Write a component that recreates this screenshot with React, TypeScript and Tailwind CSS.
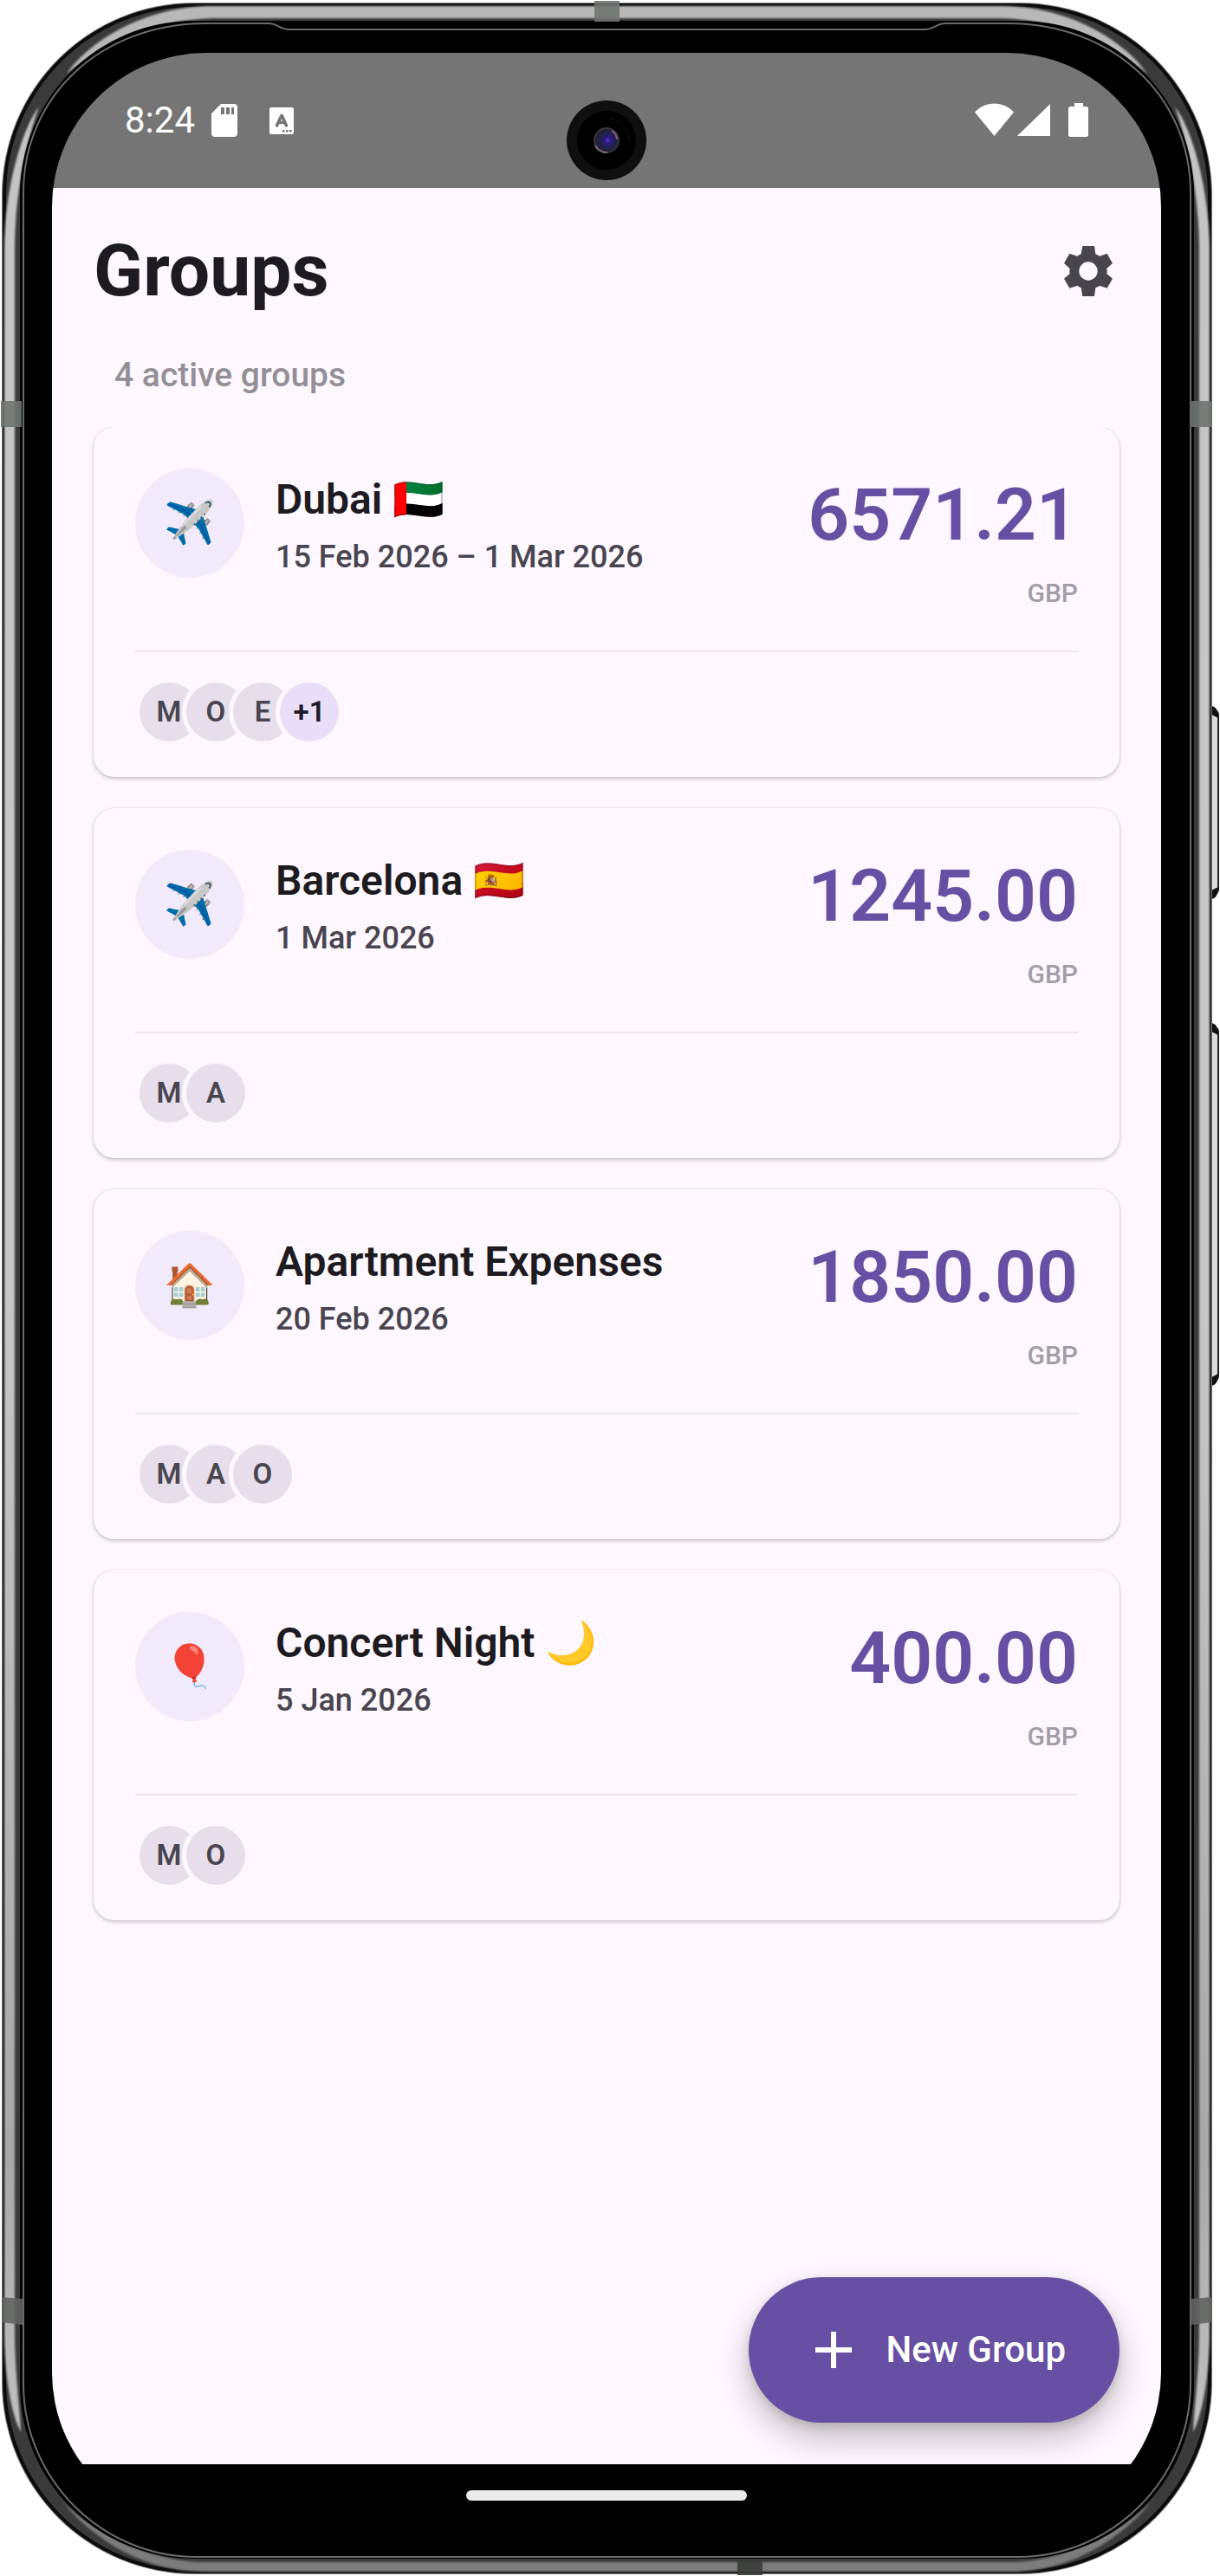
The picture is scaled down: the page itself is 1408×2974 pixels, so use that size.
import { Plus } from "lucide-react";

interface Group {
  id: string;
  icon: string;
  name: string;
  date: string;
  amount: string;
  currency: string;
  members: string[];
  extra?: string;
}

const groups: Group[] = [
  { id: "dubai", icon: "✈️", name: "Dubai 🇦🇪", date: "15 Feb 2026 – 1 Mar 2026", amount: "6571.21", currency: "GBP", members: ["M", "O", "E"], extra: "+1" },
  { id: "barcelona", icon: "✈️", name: "Barcelona 🇪🇸", date: "1 Mar 2026", amount: "1245.00", currency: "GBP", members: ["M", "A"] },
  { id: "apartment", icon: "🏠", name: "Apartment Expenses", date: "20 Feb 2026", amount: "1850.00", currency: "GBP", members: ["M", "A", "O"] },
  { id: "concert", icon: "🎈", name: "Concert Night 🌙", date: "5 Jan 2026", amount: "400.00", currency: "GBP", members: ["M", "O"] },
];

function PhoneCase() {
  return (
    <svg aria-hidden="true" className="absolute inset-0 size-full" viewBox="0 0 1408 2974" preserveAspectRatio="none">
      <defs>
        <linearGradient id="metal" x1="0" y1="0" x2="0" y2="1">
          <stop offset="0" stopColor="#c4c4c4" />
          <stop offset="0.5" stopColor="#c8c8c8" />
          <stop offset="0.88" stopColor="#a8a8a8" />
          <stop offset="1" stopColor="#c0c0c0" />
        </linearGradient>
        <filter id="soft" x="-5%" y="-5%" width="110%" height="110%">
          <feGaussianBlur stdDeviation="1" />
        </filter>
      </defs>

      {/* Side keys */}
      <g fill="#dcdcdc" stroke="#222" strokeWidth="2">
        <rect x="1390" y="820" width="16" height="212" rx="5" />
        <rect x="1390" y="1186" width="16" height="408" rx="5" />
      </g>
      <path d="M1398 815q8 1 8 14l-8-4zM1398 1038q8-1 8-14l-8 4zM1398 1181q8 1 8 14l-8-4zM1398 1600q8-1 8-14l-8 4z" fill="#111" />

      {/* Metal ring */}
      <rect x="2" y="3" width="1397" height="2969" rx="222" fill="#7a7a7a" />
      <rect x="3" y="4" width="1395" height="2967" rx="221" fill="#0c0c0c" />
      <rect x="7" y="8" width="1387" height="2959" rx="217" fill="#3a3a3a" />
      <g filter="url(#soft)">
        <path d="M77 85C105 45 170 7 245 7H1156C1231 7 1296 45 1324 85C1275 45 1210 22 1156 21H245C191 22 126 45 77 85Z" fill="#b8b8b8" />
        <path d="M45 123C22 155 5 225 5 290V2690C5 2730 10 2780 24 2808C23 2780 17 2740 17 2690V290C17 225 30 165 45 123Z" fill="url(#metal)" />
        <path d="M1356 123C1379 155 1396 225 1396 290V2690C1396 2730 1391 2780 1377 2808C1378 2780 1384 2740 1384 2690V290C1384 225 1371 165 1356 123Z" fill="url(#metal)" />
        <path d="M72 2888C110 2935 170 2969 235 2969H1166C1231 2969 1291 2935 1329 2888C1285 2930 1220 2958 1166 2958H235C181 2958 116 2930 72 2888Z" fill="#7c7c7c" />
      </g>
      <rect x="23" y="24" width="1355" height="2930" rx="201" fill="#000" />
      <path
        d="M27 223C27 110 117 28 236 27H310C320 27 323 34 334 34H1067C1078 34 1081 27 1091 27H1165C1284 28 1374 110 1374 223V2752C1374 2862 1284 2952 1174 2952H227C117 2952 27 2862 27 2752Z"
        fill="#000"
        stroke="#6a6a6a"
        strokeWidth="2"
      />

      {/* Antenna lines */}
      <g fill="#707470" fillOpacity="0.9">
        <path d="M686 1h29v24h-29zM1 463h24v30H1zM1375 463h24v30h-24z" />
        <path d="M2 2652l24 2v30l-24-3zM1399 2652l-24 2v30l24-3z" fill="#626462" />
        <path d="M851 2954h29v19h-29z" fill="#3a3c3a" />
      </g>
    </svg>
  );
}

function Camera() {
  return (
    <svg aria-hidden="true" className="absolute top-[55px] left-1/2 size-[92px] -translate-x-1/2" viewBox="0 0 92 92">
      <defs>
        <radialGradient id="lens" cx="0.55" cy="0.5" r="0.5">
          <stop offset="0" stopColor="#5a35e0" />
          <stop offset="0.25" stopColor="#2d1a80" />
          <stop offset="0.7" stopColor="#1c2440" />
          <stop offset="1" stopColor="#2a1a38" />
        </radialGradient>
      </defs>
      <circle cx="46" cy="46" r="46" fill="#0f0f0f" />
      <circle cx="46" cy="46" r="34" fill="#000" />
      <circle cx="46" cy="46" r="14" fill="url(#lens)" stroke="#3a3638" strokeWidth="2" />
      <path d="M33 52a14 14 0 0 0 14 8" fill="none" stroke="#77706e" strokeWidth="2" />
      <path d="M52 35a13 13 0 0 1 6 10" fill="none" stroke="#8a5aa0" strokeWidth="2" />
      <path d="M50 20a27 27 0 0 1 22 28" fill="none" stroke="#141414" strokeWidth="1" />
    </svg>
  );
}

function StatusBar() {
  return (
    <div className="relative flex h-[156px] shrink-0 items-start bg-[#757575] px-[84px] pt-[54px] text-white">
      <span className="text-[42px] leading-[48px]">8:24</span>
      <svg aria-hidden="true" className="mt-[5px] ml-[19px] h-[38px] w-[30px]" viewBox="0 0 30 38">
        <path fillRule="evenodd" fill="currentColor" d="M11 0H26a4 4 0 0 1 4 4V34a4 4 0 0 1-4 4H4a4 4 0 0 1-4-4V11ZM11 4v8h4V4Zm6 0v8h4V4Zm6 0v8h3V4Z" />
      </svg>
      <svg aria-hidden="true" className="mt-[9px] ml-[37px] h-[31px] w-[28px]" viewBox="0 0 28 31">
        <rect width="28" height="31" rx="2" fill="currentColor" />
        <path d="M8.500 21 13.800 9.500h.6L19.500 21M10 17.500h8" fill="none" stroke="#757575" strokeWidth="3.500" strokeLinecap="round" strokeLinejoin="round" />
        <path d="M15 26h2.500v2.500H15zM19 26h2.500v2.500H19zM23 26h2.500v2.500H23z" fill="#757575" />
      </svg>
      <div className="ml-auto flex items-start pt-[4px]">
        <svg aria-hidden="true" className="h-[38px] w-[45px]" viewBox="0 0 45 38">
          <path d="M22.500 38 0 10.500C6 4 14 .5 22.500.5S39 4 45 10.500Z" fill="currentColor" />
        </svg>
        <svg aria-hidden="true" className="ml-[4px] h-[38px] w-[38px]" viewBox="0 0 38 38">
          <path d="M38 1V38H0Z" fill="currentColor" />
        </svg>
        <svg aria-hidden="true" className="ml-[21px] h-[39px] w-[23px]" viewBox="0 0 23 39">
          <path d="M7 0h10v4h3.500A2.500 2.500 0 0 1 23 6.500v30A2.500 2.500 0 0 1 20.500 39h-18A2.500 2.500 0 0 1 0 36.500v-30A2.500 2.500 0 0 1 2.500 4H7Z" fill="currentColor" />
        </svg>
      </div>
      <Camera />
    </div>
  );
}

function GroupCard({ group }: { group: Group }) {
  return (
    <li className="rounded-[24px] bg-[#fef7ff] px-[48px] pt-[48px] pb-[36px] shadow-[0px_2px_4px_0px_rgba(0,0,0,0.22),0px_0px_2px_0px_rgba(0,0,0,0.1)]">
      <div className="flex h-[212px] items-start border-b-2 border-[#ece6ee]">
        <div className="flex size-[126px] shrink-0 items-center justify-center rounded-full bg-[#f1eafa] text-[48px] leading-[56px]">
          {group.icon}
        </div>
        <div className="ml-[36px] flex-1 pt-[6px]">
          <h2 className="text-[48px] leading-[60px] font-semibold text-[#1d1b20]">{group.name}</h2>
          <p className="mt-[12px] text-[36px] leading-[48px] font-medium text-[#49454f]">{group.date}</p>
        </div>
        <div className="text-right">
          <p className="text-[84px] leading-[108px] font-semibold text-[#6750a4]">{group.amount}</p>
          <p className="mt-[18px] text-[30px] leading-[36px] font-medium text-[#a29da6]">{group.currency}</p>
        </div>
      </div>
      <ul className="mt-[30px] flex -space-x-[24px] text-[33px] leading-[36px] font-semibold">
        {group.members.map((member) => (
          <li key={member} className="flex size-[78px] items-center justify-center rounded-full border-5 border-[#fef7ff] bg-[#e6dfeb] text-[#49454f]">
            {member}
          </li>
        ))}
        {group.extra && (
          <li className="flex size-[78px] items-center justify-center rounded-full border-5 border-[#fef7ff] bg-[#e8def8] text-[#1d192b]">
            {group.extra}
          </li>
        )}
      </ul>
    </li>
  );
}

export default function App() {
  return (
    <div className="relative flex min-h-screen w-full flex-col bg-white pt-[61px] pr-[68px] pb-[57px] pl-[60px] font-[Roboto,'Noto_Color_Emoji',sans-serif]">
      <PhoneCase />

      <div className="relative flex flex-1 flex-col overflow-hidden rounded-[178px] bg-black">
        <StatusBar />

        <main className="flex flex-1 flex-col overflow-hidden bg-[#fef7ff] px-[48px]">
          {/* Header */}
          <header className="flex h-[192px] items-center justify-between">
            <h1 className="text-[84px] leading-[96px] font-bold text-[#1d1b20]">Groups</h1>
            <button aria-label="Settings" className="mr-[8px] text-[#49454f]">
              <svg className="h-[58px] w-[56px]" viewBox="0 0 168 174">
                <path
                  fill="currentColor"
                  fillRule="evenodd"
                  d="M64 0h41l4 28 15 7 25-9 19 34-20 18q2 9 0 18l20 17-19 33-25-8-15 7-4 29H64l-5-29-14-7-26 8L0 113l20-17q-2-9 0-18L0 60l19-34 26 9 14-7ZM84 55a32 32 0 1 0 0 64 32 32 0 0 0 0-64Z"
                />
              </svg>
            </button>
          </header>
          <p className="pl-[24px] text-[39px] leading-[48px] font-medium text-[#938f96]">4 active groups</p>

          <ul className="mt-[36px] flex flex-col gap-[36px] [clip-path:inset(0px_-24px_-24px_-24px)]">
            {groups.map((group) => (
              <GroupCard key={group.id} group={group} />
            ))}
          </ul>

          {/* New group */}
          <button className="mt-auto mb-[48px] flex h-[168px] items-center gap-[24px] self-end rounded-full bg-[#6750a4] px-[62px] text-[42px] leading-[60px] font-medium text-white shadow-[0px_18px_36px_0px_rgba(0,0,0,0.24),0px_4px_12px_0px_rgba(0,0,0,0.12)]">
            <Plus size={72} strokeWidth={2} strokeLinecap="butt" />
            New Group
          </button>
        </main>

        {/* Gesture bar */}
        <div className="flex h-[72px] shrink-0 items-start justify-center bg-black pt-[30px]">
          <div className="h-[12px] w-[324px] rounded-full bg-[#ebebeb]" />
        </div>
      </div>
    </div>
  );
}
